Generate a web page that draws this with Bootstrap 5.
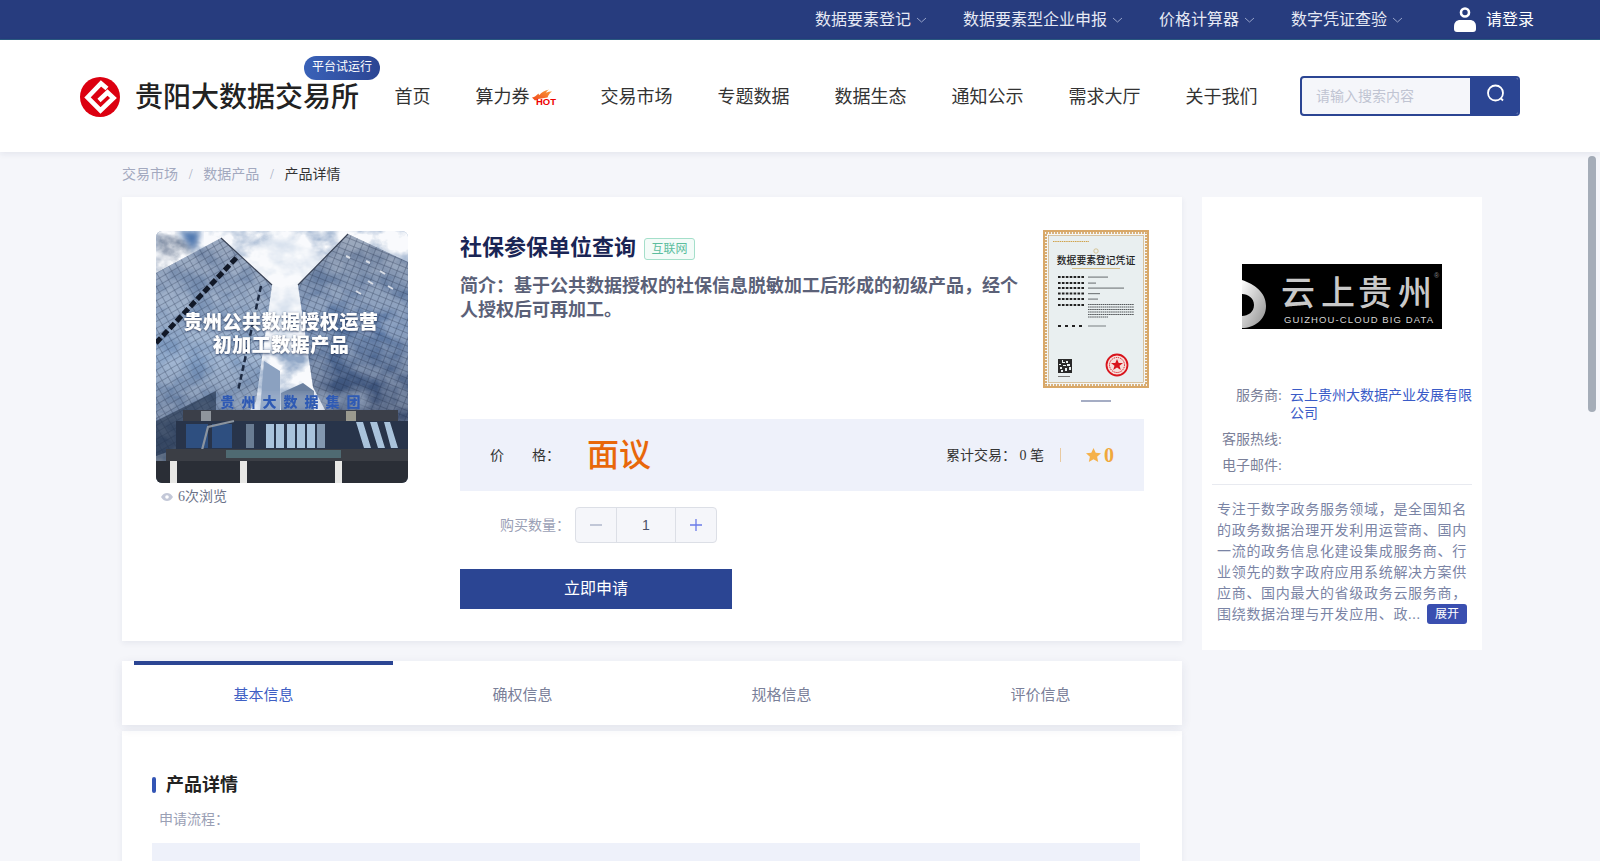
<!DOCTYPE html>
<html lang="zh-CN">
<head>
    <meta charset="UTF-8">
    <meta name="viewport" content="width=device-width, initial-scale=1.0">
    <title>社保参保单位查询 - 贵阳大数据交易所</title>
    <link href="https://cdn.jsdelivr.net/npm/bootstrap@5.3.0/dist/css/bootstrap.min.css" rel="stylesheet">
    <style>
        html, body {
            height: 861px;
            overflow: hidden;
        }
        body {
            background-color: #f5f6fa;
            font-family: "Liberation Serif", "Noto Sans CJK SC", serif;
            font-size: 14px;
            color: #333;
        }
        .top-strip {
            height: 40px;
            background-color: #273c7e;
            border-bottom: 1px solid #2a5a80;
            padding-right: 66px;
            color: #fff;
            font-size: 16px;
        }
        .top-item { margin-left: 36px; color: #e6e9f4; }
        .top-item svg { margin-left: 5px; }
        .top-login { margin-left: 51px; color: #fff; }
        .top-login svg { margin-right: 10px; }
        .site-head {
            height: 112px;
            background-color: #fff;
            padding: 0 80px;
            box-shadow: 0 2px 6px rgba(30, 40, 90, .08);
            position: relative;
            z-index: 2;
        }
        .brand-box { position: relative; margin-right: 35.5px; margin-top: 2px; }
        .brand-name {
            font-size: 28px;
            font-weight: 500;
            color: #222;
            margin-left: 15px;
            padding-top: 1px;
            line-height: 40px;
        }
        .trial-tag {
            position: absolute;
            left: 224px;
            top: -21px;
            width: 76px;
            height: 24px;
            line-height: 23px;
            text-align: center;
            border-radius: 12px;
            font-size: 12px;
            color: #fff;
            background: linear-gradient(90deg, #3a62b8, #2b4593);
        }
        .main-nav { gap: 45px; font-size: 18px; color: #333; margin-top: 2px; }
        .main-nav .nav-link { color: #333; padding: 0; }
        .hot-mark { margin-left: 2px; margin-right: -1px; }
        .search-box {
            width: 220px;
            height: 40px;
            margin-left: auto;
            border: 2px solid #2b4593;
            border-radius: 4px;
            background-color: #f5f6fa;
            overflow: hidden;
        }
        .search-input {
            border: 0;
            border-radius: 0;
            background-color: transparent;
            padding: 0 0 0 14px;
            font-size: 14px;
            font-family: inherit;
            box-shadow: none;
        }
        .search-input::placeholder { color: #c0c4d2; }
        .search-btn {
            width: 48px;
            background-color: #2b4593;
            border: 0;
            border-radius: 0;
            padding: 0 0 6px 4px;
        }
        .page-pane { position: relative; height: 709px; overflow: hidden; padding-left: 122px; }
        .crumbs {
            --bs-breadcrumb-margin-bottom: 0;
            --bs-breadcrumb-item-padding-x: 10.7px;
            --bs-breadcrumb-divider-color: #a8aec2;
            height: 45px;
            line-height: 46px;
        }
        .crumbs .breadcrumb-item { color: #a3a9bf; }
        .crumbs .breadcrumb-item.active { color: #333; }
        .crumbs a { color: #a3a9bf; text-decoration: none; }
        .thumb-bar {
            position: absolute;
            right: 4px;
            top: 4px;
            width: 8px;
            height: 256px;
            border-radius: 4px;
            background-color: #a5adb8;
        }
        .sheet {
            background-color: #fff;
            box-shadow: 0 2px 6px rgba(30, 40, 90, .07);
        }
        .left-col { width: 1060px; }
        .right-col { width: 280px; height: 453px; margin-left: 20px; padding-top: 67px; box-shadow: none; }
        .prod-sheet { height: 444px; padding: 33px 0 0 34px; }
        .prod-pic {
            width: 252px;
            height: 252px;
            margin-top: 1px;
            border-radius: 6px;
            overflow: hidden;
        }
        .view-count { color: #6c7389; line-height: 20px; margin-top: 4px; padding-left: 5px; }
        .view-count svg { margin-right: 5px; }
        .info-col { width: 684px; margin-left: 52px; }
        .intro-row { height: 189px; margin-right: -5px; }
        .intro-text { padding-top: 1px; }
        .prod-title { font-size: 22px; font-weight: 700; color: #1a2555; line-height: 34px; }
        .field-tag {
            width: 51px;
            height: 22px;
            line-height: 20px;
            margin-left: 8px;
            margin-top: 1px;
            text-align: center;
            font-size: 12px;
            color: #5bbd9e;
            border: 1px solid #a4dfca;
            background-color: #f3fbf8;
            border-radius: 3px;
        }
        .prod-desc {
            width: 566px;
            margin: 9px 0 0;
            font-size: 18px;
            font-weight: 700;
            line-height: 24px;
            color: #5b6178;
        }
        .cert-side { width: 106px; }
        .cert-dash { width: 30px; height: 2px; margin: 12px auto 0; background-color: #a5adc4; }
        .price-box {
            height: 72px;
            padding: 0 30px;
            background-color: #eef1fa;
        }
        .price-label { width: 97px; color: #333; }
        .price-big { font-size: 32px; font-weight: 500; line-height: 40px; color: #e8670a; }
        .deal-sep { width: 1px; height: 14px; margin: 0 25px 0 16px; background-color: #e8c9a0; }
        .score { font-size: 20px; font-weight: 700; color: #f0a83c; margin-left: 3px; line-height: 24px; }
        .qty-row { margin-top: 16px; padding-left: 40px; }
        .qty-label { width: 75px; color: #9aa0b5; }
        .qty-box {
            width: 142px;
            height: 36px;
            border: 1px solid #dcdfe6;
            border-radius: 4px;
            background-color: #f5f6fa;
        }
        .qty-step { width: 40px; border: 0; background: transparent; padding: 0; line-height: 0; }
        .qty-num {
            flex: 1;
            line-height: 34px;
            text-align: center;
            font-family: "Liberation Sans", sans-serif;
            color: #4a5068;
            border-left: 1px solid #dcdfe6;
            border-right: 1px solid #dcdfe6;
        }
        .apply-btn {
            display: block;
            width: 272px;
            height: 40px;
            margin-top: 26px;
            padding: 0;
            border: 0;
            border-radius: 0;
            font-size: 16px;
            color: #fff;
            background-color: #2b4593;
        }
        .tab-sheet { height: 64px; margin-top: 20px; padding-left: 12px; box-shadow: 0 3px 10px rgba(30, 40, 90, .09); position: relative; }
        .tab-cell {
            width: 259px;
            line-height: 60px;
            text-align: center;
            font-size: 15px;
            color: #7a8099;
            border-top: 4px solid transparent;
        }
        .tab-cell.is-on { color: #3f5fc4; border-top-color: #2b4593; }
        .detail-sheet { margin-top: 6px; height: 400px; padding: 41px 42px 0 30px; }
        .sect-head { font-size: 18px; font-weight: 700; color: #222; line-height: 26px; }
        .sect-head i { width: 4px; height: 16px; margin-right: 10px; border-radius: 2px; background-color: #3355b5; }
        .flow-label { margin-top: 12px; padding-left: 7px; line-height: 20px; color: #9aa0b5; }
        .flow-box { height: 300px; margin-top: 13px; background-color: #eef1fa; }
        .vendor-logo { display: block; margin: 0 auto 58px; }
        .vendor-row { margin-bottom: 8px; line-height: 18px; }
        .vendor-key { width: 80px; flex: none; text-align: right; color: #7a8099; }
        .vendor-val { width: 184px; margin-left: 8px; color: #3a5bc7; }
        .vendor-line { height: 1px; margin: 9px 10px 0; background-color: #e8eaf0; }
        .vendor-text {
            width: 252px;
            margin: 14px 0 0 15px;
            font-size: 14px;
            line-height: 21px;
            letter-spacing: .7px;
            color: #7a84a5;
        }
        .more-btn {
            float: right;
            width: 40px;
            height: 20px;
            margin: 0 2px 0 0;
            padding: 0;
            line-height: 19px;
            font-size: 12px;
            letter-spacing: 0;
            color: #fff;
            border: 0;
            border-radius: 3px;
            background-color: #3a4fb0;
        }
    </style>
</head>
<body>
    <div class="top-strip d-flex justify-content-end align-items-center">
        <div class="top-item d-flex align-items-center">数据要素登记<svg width="11" height="6" viewBox="0 0 11 6"><path d="M1 1l4.500 4L10 1" fill="none" stroke="#97a3c9" stroke-width="1"/></svg></div>
        <div class="top-item d-flex align-items-center">数据要素型企业申报<svg width="11" height="6" viewBox="0 0 11 6"><path d="M1 1l4.500 4L10 1" fill="none" stroke="#97a3c9" stroke-width="1"/></svg></div>
        <div class="top-item d-flex align-items-center">价格计算器<svg width="11" height="6" viewBox="0 0 11 6"><path d="M1 1l4.500 4L10 1" fill="none" stroke="#97a3c9" stroke-width="1"/></svg></div>
        <div class="top-item d-flex align-items-center">数字凭证查验<svg width="11" height="6" viewBox="0 0 11 6"><path d="M1 1l4.500 4L10 1" fill="none" stroke="#97a3c9" stroke-width="1"/></svg></div>
        <div class="top-login d-flex align-items-center">
            <svg width="22" height="25" viewBox="0 0 22 25"><circle cx="11" cy="5.500" r="4" fill="none" stroke="#fff" stroke-width="2.600"/><path d="M0 19.500C0 15 3 13 6 13h10c3 0 6 2 6 6.500V22c0 2-1 3-3 3H3c-2 0-3-1-3-3z" fill="#fff"/></svg>请登录
        </div>
    </div>

    <header class="site-head d-flex align-items-center">
        <div class="brand-box d-flex align-items-center">
            <svg width="40" height="40" viewBox="0 0 40 40">
                <circle cx="20" cy="20" r="20" fill="#dc0010"/>
                <path d="M27 11.500L21 6.500 7.500 20.500 20.500 33.500 33.500 21 27.500 15.500 19 23.500" fill="none" stroke="#fff" stroke-width="4.600"/>
            </svg>
            <span class="brand-name">贵阳大数据交易所</span>
            <span class="trial-tag">平台试运行</span>
        </div>
        <nav class="main-nav nav align-items-center">
            <a class="nav-link" href="#">首页</a>
            <a class="nav-link d-flex align-items-center" href="#">算力券<svg class="hot-mark" width="25" height="17" viewBox="0 0 25 17">
                <defs><linearGradient id="flame" x1="0" y1="1" x2="1" y2="0"><stop offset="0" stop-color="#f0451a"/><stop offset="1" stop-color="#f9a23a"/></linearGradient></defs>
                <path d="M0 8.500C3 8 4.500 6 6.500 4.500c.2 1 .4 1.300 1 1.500C9 3.500 12.500 1.500 17 .5c-1.500 1-2.500 2-2.800 3.200 2-1 4-1.400 5.800-1.200-2.500 1.500-3.500 3.500-4.500 6L6 10 3 11.500z" fill="url(#flame)"/>
                <text x="4" y="15.500" font-family="Liberation Sans" font-weight="700" font-size="9" textLength="20" lengthAdjust="spacingAndGlyphs" fill="#ee0000">HOT</text>
            </svg></a>
            <a class="nav-link" href="#">交易市场</a>
            <a class="nav-link" href="#">专题数据</a>
            <a class="nav-link" href="#">数据生态</a>
            <a class="nav-link" href="#">通知公示</a>
            <a class="nav-link" href="#">需求大厅</a>
            <a class="nav-link" href="#">关于我们</a>
        </nav>
        <div class="search-box d-flex">
            <input class="search-input form-control" type="text" placeholder="请输入搜索内容">
            <button class="search-btn btn flex-shrink-0" type="button">
                <svg width="20" height="20" viewBox="0 0 20 20"><circle cx="9.500" cy="9" r="7.500" fill="none" stroke="#fff" stroke-width="1.800"/><path d="M15 14.500l2 2" stroke="#fff" stroke-width="1.800"/></svg>
            </button>
        </div>
    </header>

    <div class="page-pane">
        <div class="thumb-bar"></div>
        <nav aria-label="breadcrumb">
            <ol class="breadcrumb crumbs">
                <li class="breadcrumb-item"><a href="#">交易市场</a></li>
                <li class="breadcrumb-item"><a href="#">数据产品</a></li>
                <li class="breadcrumb-item active">产品详情</li>
            </ol>
        </nav>

        <div class="d-flex align-items-start">
            <div class="left-col flex-shrink-0">
                <div class="prod-sheet sheet d-flex">
                    <div class="flex-shrink-0">
                        <div class="prod-pic">
                            <svg width="252" height="252" viewBox="0 0 252 252">
                                <defs>
                                    <linearGradient id="towerL" x1="0" y1="0" x2="0" y2="1"><stop offset="0" stop-color="#6f83a3"/><stop offset=".55" stop-color="#7f9cc2"/><stop offset="1" stop-color="#31456a"/></linearGradient>
                                    <linearGradient id="towerR" x1="0" y1="0" x2="0" y2="1"><stop offset="0" stop-color="#75859f"/><stop offset=".5" stop-color="#5b79a6"/><stop offset="1" stop-color="#2c3f63"/></linearGradient>
                                    <pattern id="gridL" width="7" height="6" patternUnits="userSpaceOnUse" patternTransform="rotate(-30)"><path d="M0 0H7M0 0V6" stroke="#26344f" stroke-width=".8" opacity=".75"/></pattern>
                                    <pattern id="gridR" width="7" height="6" patternUnits="userSpaceOnUse" patternTransform="rotate(22)"><path d="M0 0H7M0 0V6" stroke="#1f2d49" stroke-width=".8" opacity=".75"/></pattern>
                                    <filter id="clouds" x="0" y="0" width="100%" height="100%">
                                        <feTurbulence type="fractalNoise" baseFrequency=".035 .05" numOctaves="4" seed="7"/>
                                        <feColorMatrix type="matrix" values="0 0 0 0 .95  0 0 0 0 .96  0 0 0 0 .98  1.900 1.900 0 0 -1.250"/>
                                    </filter>
                                    <filter id="soft"><feGaussianBlur stdDeviation="3"/></filter>
                                    <filter id="softer"><feGaussianBlur stdDeviation=".3"/></filter>
                                    <filter id="halo" x="-10%" y="-20%" width="120%" height="140%"><feDropShadow dx="0" dy=".8" stdDeviation="1.100" flood-color="#24365c"/></filter>
                                    <clipPath id="towersClip"><path d="M0 42L65 7 116 54 100 170 84 195 0 225zM192 3L142 54 157 156 175 190H252V31z"/></clipPath>
                                </defs>
                                <rect width="252" height="252" fill="#8fa6c6"/>
                                <path d="M0 0H48L30 30 0 42z" fill="#6f7f98" filter="url(#soft)"/>
                                <ellipse cx="128" cy="60" rx="42" ry="58" fill="#d9e2ee" filter="url(#soft)"/>
                                <rect width="252" height="252" filter="url(#clouds)"/>
                                <path d="M22 0L45 0 38 20z" fill="#4c74ad" filter="url(#soft)"/>
                                <path d="M0 42L65 7 116 54 100 170 84 195 0 225z" fill="url(#towerL)"/>
                                <path d="M192 3L142 54 157 156 175 190H252V31z" fill="url(#towerR)"/>
                                <g clip-path="url(#towersClip)" opacity=".3"><rect width="252" height="252" filter="url(#clouds)"/></g>
                                <path d="M0 42L65 7 116 54 100 170 84 195 0 225z" fill="url(#gridL)"/>
                                <path d="M192 3L142 54 157 156 175 190H252V31z" fill="url(#gridR)"/>
                                <path d="M0 112L82 25" stroke="#111827" stroke-width="5" stroke-dasharray="7 3"/>
                                <path d="M105 55L82 160" stroke="#1d2a42" stroke-width="2.500" stroke-dasharray="6 3"/>
                                <path d="M65 7L116 54M192 3L142 54" stroke="#3a4356" stroke-width="1.200"/>
                                <path d="M200 60l5 3M212 50l5 3M224 40l5 3M190 25l4 2M210 30l4 2M232 55l5 3" stroke="#d8dde6" stroke-width="2"/>
                                <path d="M108 130L124 140V180H104z" fill="#8ba1c0"/>
                                <path d="M125 162L147 152 158 160V180H125z" fill="#6b80a0"/>
                                <rect x="60" y="162" width="150" height="17" fill="#a9bad2" opacity=".4" filter="url(#soft)"/>
                                <path d="M0 190L60 160V252H0z" fill="#203049" opacity=".6"/>
                                <rect x="27" y="179" width="215" height="11" fill="#3b3f49"/>
                                <rect x="45" y="180" width="10" height="10" fill="#8f959c"/><rect x="190" y="180" width="10" height="10" fill="#9b9a8f"/>
                                <rect x="20" y="190" width="232" height="32" fill="#28344a"/>
                                <g fill="#2e4f80"><rect x="30" y="193" width="22" height="24"/><rect x="56" y="193" width="20" height="24"/></g>
                                <g fill="#a9c3dc">
                                    <rect x="90" y="193" width="8" height="24" opacity=".5"/><rect x="110" y="193" width="8" height="24"/><rect x="120" y="193" width="8" height="24"/><rect x="131" y="193" width="8" height="24"/><rect x="141" y="193" width="8" height="24"/><rect x="151" y="193" width="8" height="24"/><rect x="161" y="193" width="8" height="24" opacity=".7"/>
                                    <path d="M200 191h7l8 26h-7zM214 191h7l8 26h-7zM228 191h6l8 26h-7z"/>
                                </g>
                                <path d="M38 250L52 196l26-6" fill="none" stroke="#8b949f" stroke-width="2.200"/>
                                <rect x="10" y="218" width="242" height="12" fill="#3b3e45"/>
                                <rect x="70" y="219" width="115" height="8" fill="#4f6a72"/>
                                <rect x="0" y="230" width="252" height="22" fill="#2a2e36"/>
                                <rect x="14" y="230" width="7" height="22" fill="#e8e8e6"/><rect x="84" y="230" width="7" height="22" fill="#e8e8e6"/><rect x="179" y="230" width="7" height="22" fill="#e8e8e6"/>
                                <g font-family="Noto Sans CJK SC" font-weight="900" text-anchor="middle">
                                    <text font-size="19" letter-spacing=".5" fill="#fff" filter="url(#halo)"><tspan x="125" y="98">贵州公共数据授权运营</tspan><tspan x="125" dy="23">初加工数据产品</tspan></text>
                                    <text x="138" y="176" font-size="14" letter-spacing="7" fill="#2f5ab4" filter="url(#softer)">贵州大数据集团</text>
                                </g>
                            </svg>
                        </div>
                        <div class="view-count d-flex align-items-center">
                            <svg width="12" height="8" viewBox="0 0 12 8"><path d="M0 4c2-3.200 4-4 6-4s4 .8 6 4c-2 3.200-4 4-6 4S2 7.200 0 4z" fill="#c3c8d8"/><circle cx="6" cy="4" r="1.800" fill="#fff"/></svg>6次浏览
                        </div>
                    </div>
                    <div class="info-col">
                        <div class="intro-row d-flex justify-content-between">
                            <div class="intro-text">
                                <div class="d-flex align-items-center">
                                    <span class="prod-title">社保参保单位查询</span>
                                    <span class="field-tag">互联网</span>
                                </div>
                                <p class="prod-desc">简介：基于公共数据授权的社保信息脱敏加工后形成的初级产品，经个人授权后可再加工。</p>
                            </div>
                            <div class="cert-side">
                                <svg width="106" height="158" viewBox="0 0 106 158">
                                    <rect x="1" y="1" width="104" height="156" fill="#f4f6f6" stroke="#d9a868" stroke-width="2"/>
                                    <rect x="3" y="3" width="100" height="152" fill="none" stroke="#cf9c55" stroke-width="1.600" stroke-dasharray="2 1"/>
                                    <rect x="5.500" y="5.500" width="95" height="147" fill="#e9eff0" stroke="#c9a36a" stroke-width=".6"/>
                                    <path d="M10 11.500h36" stroke="#d0a24a" stroke-width="1.200" stroke-dasharray="1.500 .7"/>
                                    <circle cx="53" cy="21" r="2.200" fill="none" stroke="#cdb272" stroke-width=".7"/>
                                    <text x="53" y="33.500" font-family="Noto Sans CJK SC" font-weight="500" font-size="9.800" text-anchor="middle" fill="#222">数据要素登记凭证</text>
                                    <path d="M29 38.500h48" stroke="#cdb272" stroke-width=".8"/>
                                    <g fill="none" stroke="#222" stroke-width="2" stroke-dasharray="2.600 1.300">
                                        <path d="M15 47h26M15 53h26M15 58h26M15 63.500h26M15 69h26M15 75h26"/>
                                    </g>
                                    <path d="M15 96h3M22 96h3M29 96h3M36 96h3" stroke="#222" stroke-width="2"/>
                                    <g fill="#7b8082">
                                        <rect x="45" y="46.500" width="20" height="1.200"/><rect x="45" y="52.500" width="8" height="1.200"/><rect x="45" y="57.500" width="36" height="1.200"/><rect x="45" y="63" width="12" height="1.200"/><rect x="45" y="68.500" width="10" height="1.200"/>
                                        <rect x="45" y="95.500" width="18" height="1"/>
                                    </g>
                                    <g fill="none" stroke="#55595c" stroke-width="1" stroke-dasharray="1.600 .5">
                                        <path d="M45 74.500h46M45 77h46M45 79.500h46M45 82h46M45 84.500h46M45 87h20"/>
                                    </g>
                                    <rect x="15" y="129" width="14" height="14" fill="#2a2a2a"/>
                                    <path d="M19 130h1v2h2v1h-3zM23 131h2v2h-2zM16 134h2v1h-2zM20 135h3v1h-3zM24 134h3v2h-3zM17 137h2v2h-2zM22 138h2v3h-2zM26 137h2v3h-2zM18 140h2v2h-2z" fill="#e9eff0"/>
                                    <rect x="15" y="146" width="12" height="1" fill="#777"/>
                                    <circle cx="74" cy="135" r="10.500" fill="#f6dfdc" stroke="#d8141c" stroke-width="1.800"/>
                                    <circle cx="74" cy="135" r="7.500" fill="none" stroke="#d8141c" stroke-width="1" stroke-dasharray="1.200 .8"/>
                                    <path d="M74 129l1.700 4h4.300l-3.500 2.700 1.300 4.200-3.800-2.500-3.800 2.500 1.300-4.200L68 133h4.300z" fill="#d8141c"/>
                                </svg>
                                <div class="cert-dash"></div>
                            </div>
                        </div>
                        <div class="price-box d-flex align-items-center">
                            <span class="price-label">价　　格：</span>
                            <span class="price-big">面议</span>
                            <div class="ms-auto d-flex align-items-center">
                                <span>累计交易： 0 笔</span>
                                <span class="deal-sep"></span>
                                <svg width="15" height="14" viewBox="0 0 15 14"><path d="M7.500 0l2.200 4.700 5.300.6-3.900 3.500 1.100 5.200-4.700-2.700L2.800 14l1.100-5.200L0 5.300l5.300-.6z" fill="#f5b14a"/></svg>
                                <span class="score">0</span>
                            </div>
                        </div>
                        <div class="qty-row d-flex align-items-center">
                            <span class="qty-label">购买数量：</span>
                            <div class="qty-box d-flex">
                                <button class="qty-step" type="button"><svg width="12" height="2" viewBox="0 0 12 2"><path d="M0 1h12" stroke="#a5adc4" stroke-width="1.300"/></svg></button>
                                <span class="qty-num">1</span>
                                <button class="qty-step" type="button"><svg width="12" height="12" viewBox="0 0 12 12"><path d="M0 6h12M6 0v12" stroke="#6a7be8" stroke-width="1.300"/></svg></button>
                            </div>
                        </div>
                        <button class="apply-btn btn" type="button">立即申请</button>
                    </div>
                </div>

                <div class="tab-sheet sheet d-flex">
                    <div class="tab-cell is-on">基本信息</div>
                    <div class="tab-cell">确权信息</div>
                    <div class="tab-cell">规格信息</div>
                    <div class="tab-cell">评价信息</div>
                </div>

                <div class="detail-sheet sheet">
                    <div class="sect-head d-flex align-items-center"><i></i>产品详情</div>
                    <div class="flow-label">申请流程：</div>
                    <div class="flow-box"></div>
                </div>
            </div>

            <aside class="right-col sheet flex-shrink-0">
                <svg class="vendor-logo" width="200" height="65" viewBox="0 0 200 65">
                    <defs><linearGradient id="ring" x1="0" y1="0" x2="1" y2="1"><stop offset="0" stop-color="#fff"/><stop offset="1" stop-color="#8d8d8d"/></linearGradient></defs>
                    <rect width="200" height="65" fill="#000"/>
                    <path d="M0 16C12 20 24 28 24 42 24 56 12 64 0 64zM0 30v22c6 0 12-4 12-11S6 30 0 30z" fill="url(#ring)" fill-rule="evenodd"/>
                    <g font-family="Noto Sans CJK SC" font-weight="500" font-size="34" fill="#c9c9c9">
                        <text x="39" y="41">云</text><text x="79" y="41">上</text><text x="116" y="41">贵</text><text x="156" y="41">州</text>
                    </g>
                    <text x="42" y="59" font-family="Liberation Sans" font-size="9.500" textLength="149" lengthAdjust="spacing" fill="#d6d6d6">GUIZHOU-CLOUD  BIG  DATA</text>
                    <text x="192" y="14" font-family="Liberation Sans" font-size="7" fill="#888">®</text>
                </svg>
                <div class="vendor-row d-flex"><span class="vendor-key">服务商:</span><span class="vendor-val">云上贵州大数据产业发展有限公司</span></div>
                <div class="vendor-row d-flex"><span class="vendor-key">客服热线:</span></div>
                <div class="vendor-row d-flex mb-0"><span class="vendor-key">电子邮件:</span></div>
                <div class="vendor-line"></div>
                <div class="vendor-text">专注于数字政务服务领域，是全国知名的政务数据治理开发利用运营商、国内一流的政务信息化建设集成服务商、行业领先的数字政府应用系统解决方案供应商、国内最大的省级政务云服务商，<button class="more-btn btn" type="button">展开</button>围绕数据治理与开发应用、政...</div>
            </aside>
        </div>
    </div>

    <script src="https://cdn.jsdelivr.net/npm/bootstrap@5.3.0/dist/js/bootstrap.bundle.min.js"></script>
</body>
</html>
